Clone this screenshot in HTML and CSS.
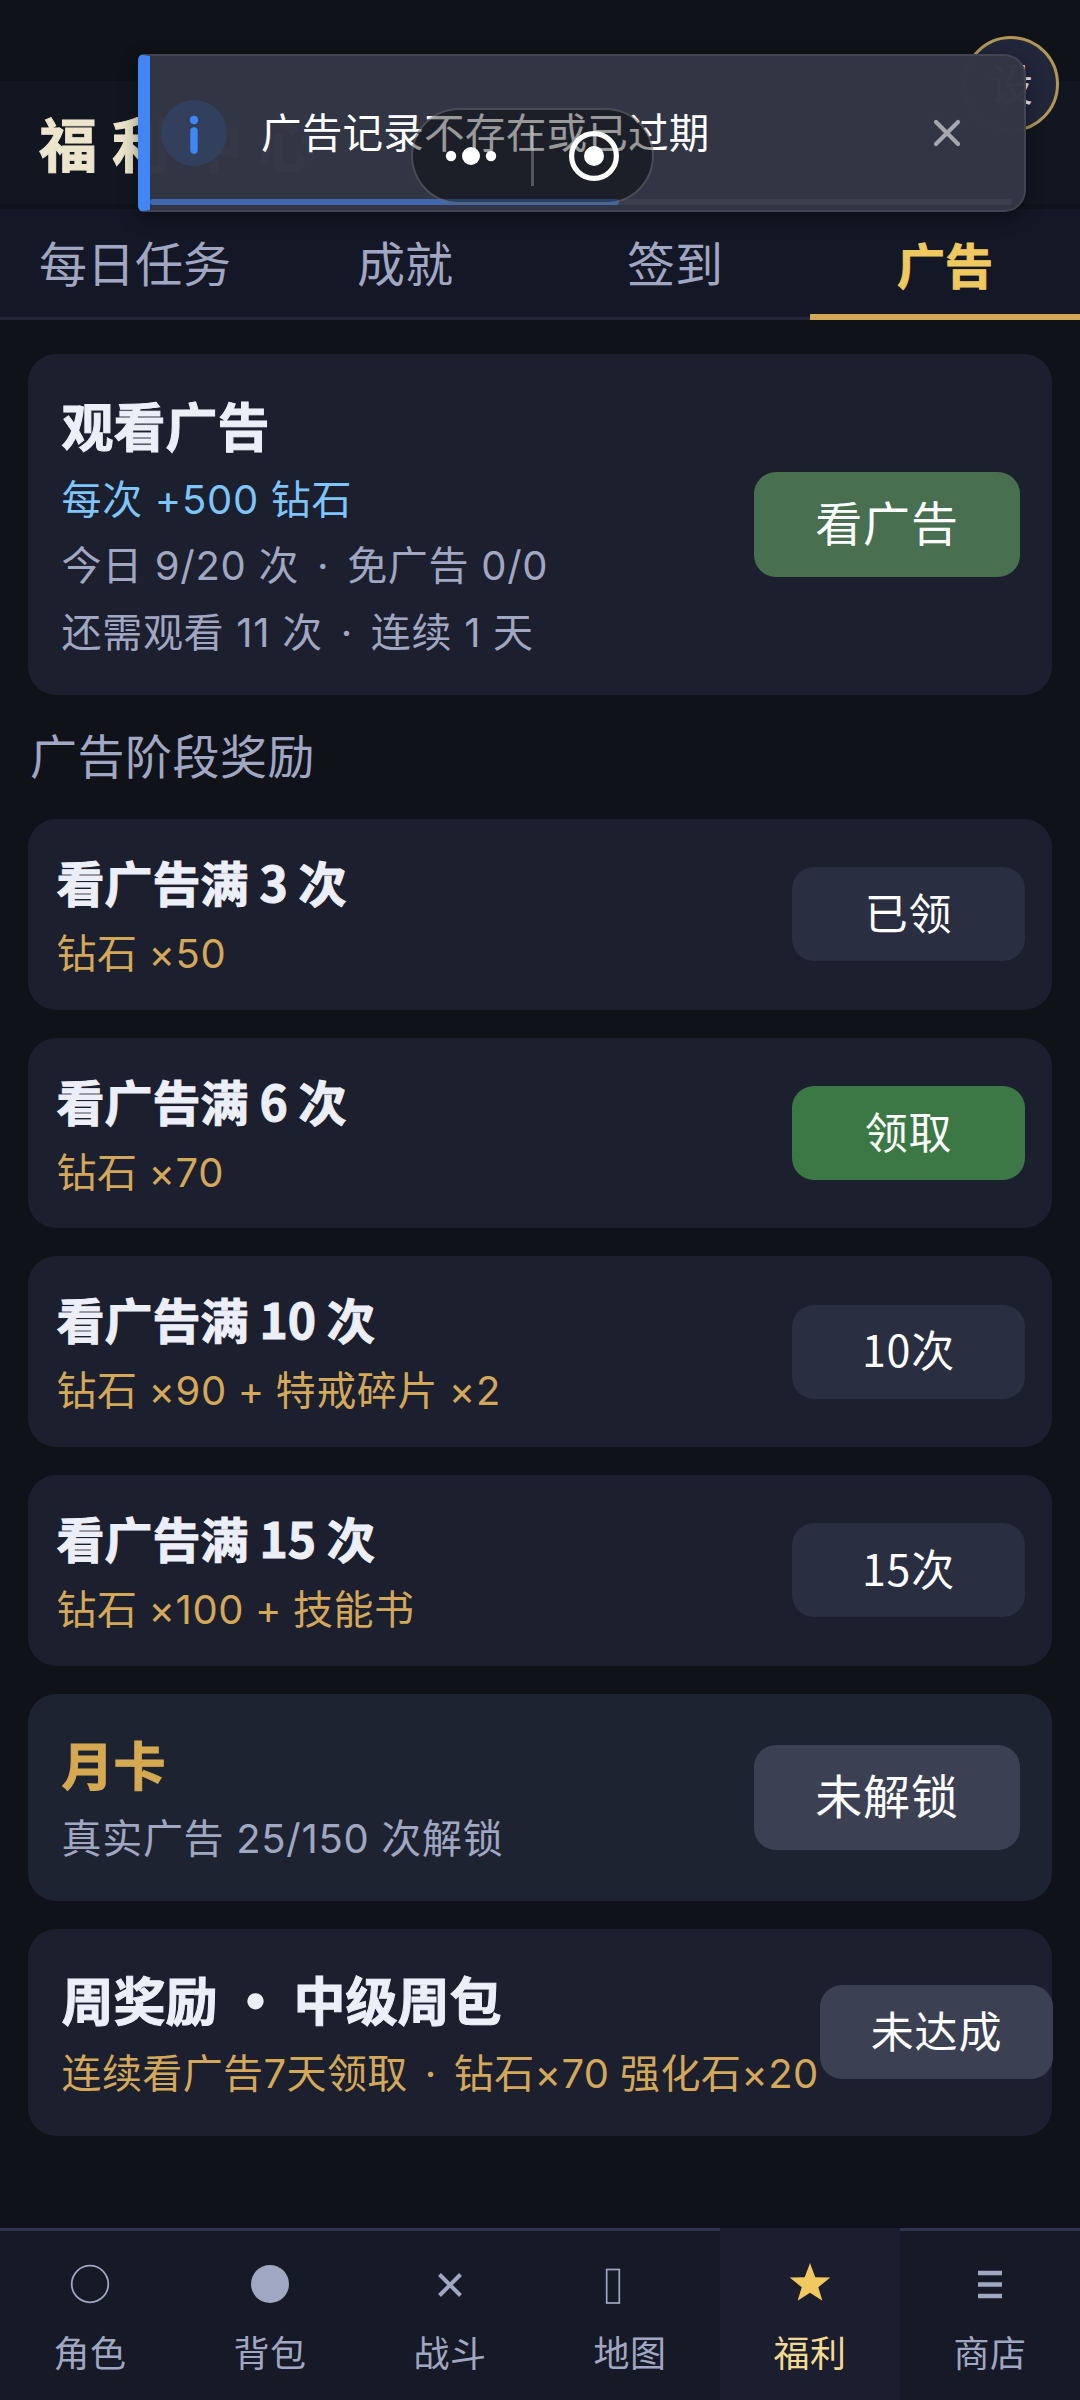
FILE: index.html
```html
<!DOCTYPE html>
<html lang="zh-CN">
<head>
<meta charset="utf-8">
<title>福利中心</title>
<link rel="stylesheet" href="styles.css">
</head>
<body>
<div class="app">
  <header class="header"><h1 class="header-title">福利中心</h1></header>
  <nav class="tabs">
    <span class="tab">每日任务</span>
    <span class="tab">成就</span>
    <span class="tab">签到</span>
    <span class="tab tab-active">广告</span>
  </nav>

  <main class="content">
    <section class="card card-watch">
      <div class="info">
        <h2 class="title title-lg">观看广告</h2>
        <p class="sub sub-blue">每次 +500 钻石</p>
        <p class="sub">今日 9/20 次<span class="sep">·</span>免广告 0/0</p>
        <p class="sub">还需观看 11 次<span class="sep">·</span>连续 1 天</p>
      </div>
      <button class="btn btn-lg btn-watch">看广告</button>
    </section>

    <h3 class="section-title">广告阶段奖励</h3>

    <section class="card card-stage">
      <div class="info">
        <h2 class="title">看广告满 3 次</h2>
        <p class="sub sub-gold">钻石 ×50</p>
      </div>
      <button class="btn">已领</button>
    </section>
    <section class="card card-stage">
      <div class="info">
        <h2 class="title">看广告满 6 次</h2>
        <p class="sub sub-gold">钻石 ×70</p>
      </div>
      <button class="btn btn-claim">领取</button>
    </section>
    <section class="card card-stage">
      <div class="info">
        <h2 class="title">看广告满 10 次</h2>
        <p class="sub sub-gold">钻石 ×90 + 特戒碎片 ×2</p>
      </div>
      <button class="btn">10次</button>
    </section>
    <section class="card card-stage">
      <div class="info">
        <h2 class="title">看广告满 15 次</h2>
        <p class="sub sub-gold">钻石 ×100 + 技能书</p>
      </div>
      <button class="btn">15次</button>
    </section>

    <section class="card card-pass card-month">
      <div class="info">
        <h2 class="title title-lg title-gold">月卡</h2>
        <p class="sub">真实广告 25/150 次解锁</p>
      </div>
      <button class="btn btn-lg btn-locked">未解锁</button>
    </section>
    <section class="card card-pass card-week">
      <div class="info">
        <h2 class="title title-lg">周奖励<span class="bullet">•</span>中级周包</h2>
        <p class="sub sub-gold">连续看广告7天领取<span class="sep">·</span>钻石×70 强化石×20</p>
      </div>
      <button class="btn btn-locked">未达成</button>
    </section>
  </main>

  <nav class="navbar">
    <div class="nav-item">
      <svg class="nav-icon" viewBox="0 0 40 40"><circle cx="20" cy="20" r="18.3" fill="none" stroke="currentColor" stroke-width="1.8"/></svg>
      <span>角色</span>
    </div>
    <div class="nav-item">
      <svg class="nav-icon" viewBox="0 0 40 40"><circle cx="20" cy="20" r="19" fill="currentColor"/></svg>
      <span>背包</span>
    </div>
    <div class="nav-item">
      <svg class="nav-icon" viewBox="0 0 40 40"><path d="M9.5 10.5 30.5 31.5M30.5 10.5 9.5 31.5" stroke="currentColor" stroke-width="4"/></svg>
      <span>战斗</span>
    </div>
    <div class="nav-item">
      <svg class="nav-icon" viewBox="0 0 40 40"><rect x="-3.3" y="5.5" width="12.6" height="33.5" fill="none" stroke="currentColor" stroke-width="1.7"/></svg>
      <span>地图</span>
    </div>
    <div class="nav-item nav-active">
      <svg class="nav-icon" viewBox="0 0 40 40"><path d="M20 -1 25.3 13.2 40.3 13.6 28.3 23.2 32.4 36.8 20 28.8 7.6 36.8 11.7 23.2 -.3 13.6 14.7 13.2Z" fill="currentColor"/></svg>
      <span>福利</span>
    </div>
    <div class="nav-item">
      <svg class="nav-icon" viewBox="0 0 40 40"><path d="M8 9H32M8 20.5H32M8 32H32" stroke="currentColor" stroke-width="4.5"/></svg>
      <span>商店</span>
    </div>
  </nav>
</div>

<button class="settings">设</button>

<div class="toast">
  <svg class="toast-icon" viewBox="0 0 66 66">
    <circle cx="33" cy="33" r="33" fill="#32405e"/>
    <circle cx="33" cy="20" r="4.2" fill="#4285f4"/>
    <path d="M33 31V50" stroke="#4285f4" stroke-width="7.4" stroke-linecap="round"/>
  </svg>
  <span class="toast-text">广告记录不存在或已过期</span>
  <svg class="toast-close" viewBox="0 0 28 28"><path d="M3 3 25 25M25 3 3 25" stroke="#a5a7ad" stroke-width="4.2" stroke-linecap="round"/></svg>
  <div class="toast-track"><div class="toast-progress"></div></div>
</div>

<div class="capsule">
  <svg class="capsule-dots" viewBox="0 0 50 20"><circle cx="5" cy="10" r="5.2"/><circle cx="25" cy="10" r="9"/><circle cx="45" cy="10" r="5.2"/></svg>
  <span class="capsule-line"></span>
  <svg class="capsule-ring" viewBox="0 0 50 50"><circle cx="25" cy="25" r="22.4" fill="none" stroke="#fff" stroke-width="5.2"/><circle cx="25" cy="25" r="10"/></svg>
</div>
</body>
</html>
```
FILE: styles.css
```css
* { box-sizing: border-box; margin: 0; padding: 0; }

body {
  width: 1080px;
  height: 2400px;
  overflow: hidden;
  background: #0f1218;
  color: #a0a7c2;
  font-family: "Noto Sans CJK SC", sans-serif;
}

button { border: 0; font-family: inherit; white-space: nowrap; }
svg { overflow: visible; flex: none; }

.app { display: flex; flex-direction: column; height: 2400px; padding-top: 81px; }

/* header and tabs */
.header { height: 128px; padding: 23px 0 0 39px; background: #121620; border-bottom: 5px solid #10131b; }
.header-title {
  font-size: 58px; line-height: 76px; font-weight: 700; letter-spacing: 15px; color: #ece5cc;
  -webkit-text-stroke: 1px currentColor;
}
.tabs { display: flex; height: 111px; background: #141725; border-bottom: 3px solid #22263a; }
.tab { flex: 1; height: 111px; text-align: center; font-size: 48px; line-height: 105px; }
.tab-active {
  color: #f0c860; font-weight: 700; border-bottom: 6px solid #d3a755; line-height: 109px;
  -webkit-text-stroke: 1px currentColor;
}

/* cards */
.content { flex: 1; display: flex; flex-direction: column; padding: 34px 28px 0; }
.card {
  flex: none; display: flex; align-items: center; justify-content: space-between;
  background: #1c1f2e; border-radius: 28px;
}
.card-watch { height: 341px; padding: 0 32px 0 33.5px; }
.card-stage { height: 190.7px; padding: 0 27px 0 28.5px; margin-bottom: 28px; }
.card-pass { height: 207.3px; padding: 0 32px 0 33.5px; margin-bottom: 27.7px; }
.card-month { background: #1e2332; }
.card-week { padding-right: 0; }
.card-week .info { width: 758px; }
.card-week .btn { margin-right: -1px; }
.card-week .sub { letter-spacing: 0.4px; }

.info { white-space: nowrap; padding-top: 6px; }
.title {
  font-size: 48px; line-height: 68px; font-weight: 700; color: #eceff8; margin-bottom: 6px;
  -webkit-text-stroke: 1px currentColor;
}
.title-lg { font-size: 52px; line-height: 72px; }
.title-gold { color: #d5a952; }
.sub {
  font-family: Inter, "Noto Sans CJK SC", sans-serif;
  font-size: 40px; line-height: 66.5px; letter-spacing: 0.7px;
}
.sub-blue { color: #7dc5fb; }
.sub-gold { color: #d3a85a; letter-spacing: 0.6px; word-spacing: -1px; }
.sep { display: inline-block; width: 48px; text-align: center; }
.card-week .sep { width: 46px; }
.bullet { display: inline-block; width: 76px; text-align: center; -webkit-text-stroke: 3px currentColor; }

.section-title { font-size: 47px; line-height: 68px; font-weight: 400; letter-spacing: 0.5px; padding: 25px 0 31px 2px; }

.btn {
  flex: none; width: 233px; height: 94px; padding-bottom: 7px; border-radius: 22px;
  background: #292e41; color: #fff; font-size: 43px; line-height: 86px; letter-spacing: 0.8px;
}
.btn-lg { width: 266px; height: 105px; font-size: 47px; line-height: 98px; }
.btn-watch { background: #476f50; }
.btn-claim { background: #3c7845; }
.btn-locked { background: #3c4053; }

/* bottom navigation */
.navbar { display: flex; flex: none; height: 172px; background: #161926; }
.nav-item {
  flex: 1; display: flex; flex-direction: column; align-items: center;
  border-top: 3px solid #30344e; padding-top: 33px;
  font-size: 36px; line-height: 56px; letter-spacing: 0.6px;
}
.nav-icon { width: 40px; height: 40px; margin-bottom: 19px; }
.nav-active { background: #1a1e2f; border-top-color: #1a1e2f; color: #f1c95f; }
.nav-active span { color: #f5db91; }

/* floating layers */
.settings {
  position: absolute; left: 963px; top: 36px; width: 96px; height: 96px;
  border: 3px solid #b29658; border-radius: 50%; padding-bottom: 4px;
  background: #22263a; color: #eceff8; font-size: 44px; line-height: 82px;
}
.toast {
  position: absolute; left: 138px; top: 54px; width: 888px; height: 158px;
  display: flex; align-items: center; padding: 0 63px 0 11px;
  background: rgba(50, 54, 69, 0.99);
  border: 2px solid #414552; border-left: 12px solid #4285f4; border-radius: 6px 22px 22px 6px;
  box-shadow: 0 6px 18px rgba(0, 0, 0, 0.4);
}
.toast-icon { width: 66px; height: 66px; }
.toast-text {
  flex: 1; margin-left: 34px; padding-bottom: 5px; color: #fff;
  font-size: 40.6px; line-height: 60px; letter-spacing: 0.2px; white-space: nowrap;
}
.toast-close { width: 28px; height: 28px; }
.toast-track { position: absolute; left: 0; right: 12px; bottom: 5px; height: 6px; border-radius: 3px; background: #3b3f4e; }
.toast-progress { width: 469px; height: 6px; border-radius: 3px; background: #4069ad; }

.capsule {
  position: absolute; left: 411px; top: 108px; width: 243px; height: 96px;
  display: flex; align-items: center; padding: 0 33px 0 33px; justify-content: space-between;
  background: rgba(0, 0, 0, 0.4); border: 2.5px solid rgba(255, 255, 255, 0.2); border-radius: 48px;
}
.capsule svg { fill: #fff; }
.capsule-dots { width: 50px; height: 20px; }
.capsule-line { width: 3px; height: 60px; background: rgba(255, 255, 255, 0.25); }
.capsule-ring { width: 50px; height: 50px; }
```
